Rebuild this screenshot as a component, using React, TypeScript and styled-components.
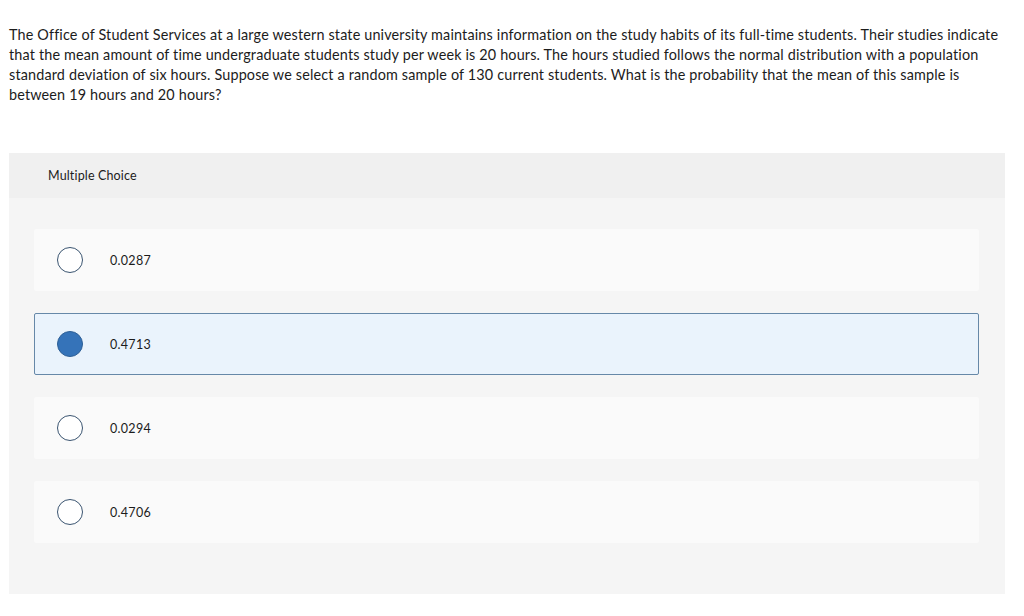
import styled, { createGlobalStyle } from "styled-components";

const GlobalStyle = createGlobalStyle`
  html, body {
    margin: 0;
    padding: 0;
    background: #ffffff;
  }
  body {
    font-family: Lato, "Liberation Sans", sans-serif;
    color: #1a1a1a;
  }
`;

const options = [
  { id: "a", value: "0.0287", selected: false },
  { id: "b", value: "0.4713", selected: true },
  { id: "c", value: "0.0294", selected: false },
  { id: "d", value: "0.4706", selected: false },
];

export default function App() {
  return (
    <>
      <GlobalStyle />
      <Page>
        <Question>
          The Office of Student Services at a large western state university maintains information on the study habits of its full-time students. Their studies indicate
          <br />
          that the mean amount of time undergraduate students study per week is 20 hours. The hours studied follows the normal distribution with a population
          <br />
          standard deviation of six hours. Suppose we select a random sample of 130 current students. What is the probability that the mean of this sample is
          <br />
          between 19 hours and 20 hours?
        </Question>

        <Panel>
          <PanelHeader>Multiple Choice</PanelHeader>
          <OptionList>
            {options.map(({ id, value, selected }) => (
              <Option key={id} $selected={selected}>
                <Radio $selected={selected} />
                <OptionLabel>{value}</OptionLabel>
              </Option>
            ))}
          </OptionList>
        </Panel>
      </Page>
    </>
  );
}

const Page = styled.div`
  width: 1024px;
  height: 616px;
  box-sizing: border-box;
  padding: 25px 19px 0 9px;
`;

const Question = styled.p`
  margin: 0;
  font-size: 14.4px;
  letter-spacing: 0.16px;
  line-height: 20px;
  white-space: nowrap;
  color: #1c1c1c;
`;

const Panel = styled.section`
  margin-top: 48px;
  width: 996px;
  height: 441px;
  background: #f5f5f5;
  display: flex;
  flex-direction: column;
`;

const PanelHeader = styled.div`
  height: 45px;
  background: #f0f0f0;
  display: flex;
  align-items: center;
  padding-left: 39px;
  font-size: 12.5px;
  letter-spacing: 0.15px;
  color: #1c1c1c;
`;

const OptionList = styled.div`
  display: flex;
  flex-direction: column;
  gap: 22px;
  padding: 31px 26px 0 25px;
`;

const Option = styled.div<{ $selected: boolean }>`
  height: 62px;
  box-sizing: border-box;
  display: flex;
  align-items: center;
  padding-left: 22px;
  border-radius: 2px;
  background: ${({ $selected }) => ($selected ? "#eaf3fc" : "#fafafa")};
  border: 1px solid ${({ $selected }) => ($selected ? "#6688a8" : "transparent")};
`;

const Radio = styled.span<{ $selected: boolean }>`
  width: 26px;
  height: 26px;
  box-sizing: border-box;
  border-radius: 50%;
  flex-shrink: 0;
  border: 1px solid ${({ $selected }) => ($selected ? "#2d5f96" : "#3a5470")};
  background: ${({ $selected }) => ($selected ? "#3573b9" : "#ffffff")};
`;

const OptionLabel = styled.span`
  margin-left: 27px;
  font-size: 12.5px;
  letter-spacing: 0.3px;
  color: #1c1c1c;
`;
